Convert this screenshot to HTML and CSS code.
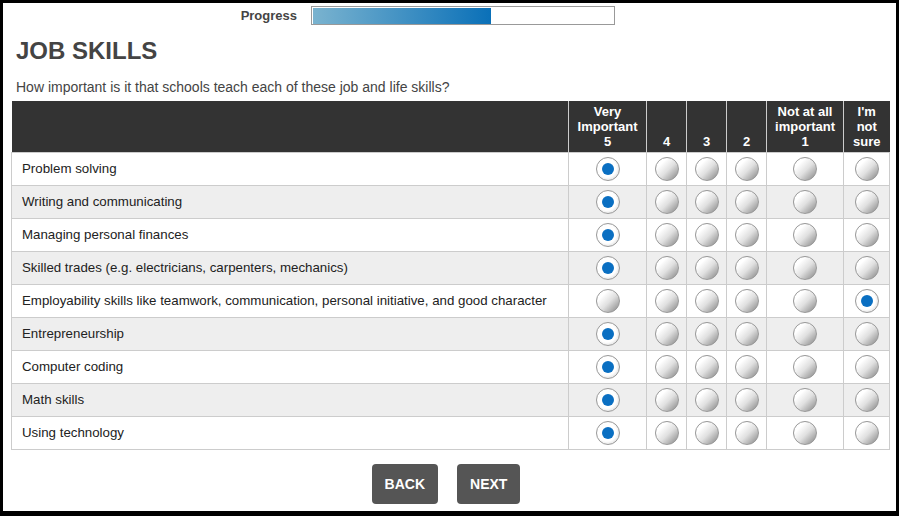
FILE: index.html
```html
<html>
    <head>
        <meta charset="utf-8" />
        <title>Job Skills</title>
        <meta name="viewport" content="width=device-width, initial-scale=1">
        <link rel="stylesheet" href="styles.css">
    </head>
    <body>
        <div class="progress-row">
            <span class="progress-label">Progress</span>
            <div class="progress-bar"><div class="progress-fill" style="width: 59%"></div></div>
        </div>
        <h1>JOB SKILLS</h1>
        <p class="question">How important is it that schools teach each of these job and life skills?</p>
        <table class="grid">
            <colgroup>
                <col>
                <col class="c5">
                <col class="c4">
                <col class="c3">
                <col class="c2">
                <col class="c1">
                <col class="c0">
            </colgroup>
            <thead>
                <tr>
                    <th class="label-col"></th>
                    <th>Very<br>Important<br>5</th>
                    <th>4</th>
                    <th>3</th>
                    <th>2</th>
                    <th>Not at all<br>important<br>1</th>
                    <th>I'm<br>not<br>sure</th>
                </tr>
            </thead>
            <tbody id="rows"></tbody>
        </table>
        <div class="buttons">
            <div class="btn">BACK</div>
            <div class="btn">NEXT</div>
        </div>
    <script>
        const items = [
            ["Problem solving", 0],
            ["Writing and communicating", 0],
            ["Managing personal finances", 0],
            ["Skilled trades (e.g. electricians, carpenters, mechanics)", 0],
            ["Employability skills like teamwork, communication, personal initiative, and good character", 5],
            ["Entrepreneurship", 0],
            ["Computer coding", 0],
            ["Math skills", 0],
            ["Using technology", 0]
        ];
        const tbody = document.getElementById("rows");
        items.forEach(item => {
            const tr = document.createElement("tr");
            let html = `<td class="label">${item[0]}</td>`;
            for (let i = 0; i < 6; i++) {
                html += `<td class="cell"><span class="radio${i === item[1] ? " on" : ""}"></span></td>`;
            }
            tr.innerHTML = html;
            tbody.appendChild(tr);
        });
    </script>
    </body>
</html>
```

FILE: styles.css
```css
html {
    background: black;
}

body {
    margin: 0;
    box-sizing: border-box;
    height: 516px;
    border: 3px solid black;
    border-bottom-width: 5px;
    background: white;
    font-family: "Liberation Sans", Arial, sans-serif;
    color: #444;
    padding: 0 6px 0 8px;
}

.progress-row {
    display: flex;
    align-items: center;
    height: 21px;
    padding-top: 2px;
}

.progress-label {
    width: 286px;
    text-align: right;
    font-size: 13px;
    font-weight: bold;
    color: #444;
    padding-right: 14px;
}

.progress-bar {
    width: 301px;
    border: 1px solid #999;
    padding: 1px 0 0 1px;
    box-sizing: content-box;
    height: 16px;
}

.progress-fill {
    height: 16px;
    background: linear-gradient(to right, #7ab3cf, #0a70b8);
}

h1 {
    margin: 11px 0 0 5px;
    font-size: 24px;
    line-height: 28px;
    color: #444;
}

.question {
    margin: 14px 0 0 5px;
    font-size: 14px;
    line-height: 16px;
    color: #444;
}

.grid {
    margin-top: 6px;
    width: 879px;
    border-collapse: collapse;
    table-layout: fixed;
}

.c5 { width: 78px; }
.c4, .c3, .c2 { width: 40px; }
.c1 { width: 77px; }
.c0 { width: 46px; }

th {
    background: #333;
    color: white;
    font-size: 13px;
    line-height: 15px;
    font-weight: bold;
    vertical-align: bottom;
    padding: 0 0 3px 0;
    height: 51px;
    box-sizing: border-box;
    border-left: 1px solid #ccc;
}

th.label-col {
    border-left: none;
}

td {
    border: 1px solid #ccc;
    height: 33px;
    box-sizing: border-box;
    padding: 0;
}

tbody tr:nth-child(even) td {
    background: #eee;
}

td.label {
    font-size: 13.3px;
    color: #222;
    padding-left: 10px;
}

td.cell {
    text-align: center;
}

.radio {
    display: inline-block;
    vertical-align: middle;
    width: 22px;
    height: 22px;
    border: 1px solid #9a9a9a;
    border-radius: 50%;
    background: linear-gradient(135deg, #ffffff 25%, #e0e0e0 55%, #8e8e8e 95%);
    position: relative;
}

.radio.on {
    background: radial-gradient(circle at 45% 45%, #ffffff 55%, #c4c4c4 100%);
}

.radio.on::after {
    content: "";
    position: absolute;
    left: 5px;
    top: 5px;
    width: 12px;
    height: 12px;
    border-radius: 50%;
    background: #0a6fc2;
}

.buttons {
    display: flex;
    justify-content: center;
    gap: 19px;
    margin-top: 14px;
    padding-right: 9px;
}

.btn {
    display: flex;
    align-items: center;
    justify-content: center;
    height: 40px;
    padding: 0 13px;
    background: #555;
    color: white;
    font-size: 14px;
    font-weight: bold;
    border-radius: 4px;
}
```
